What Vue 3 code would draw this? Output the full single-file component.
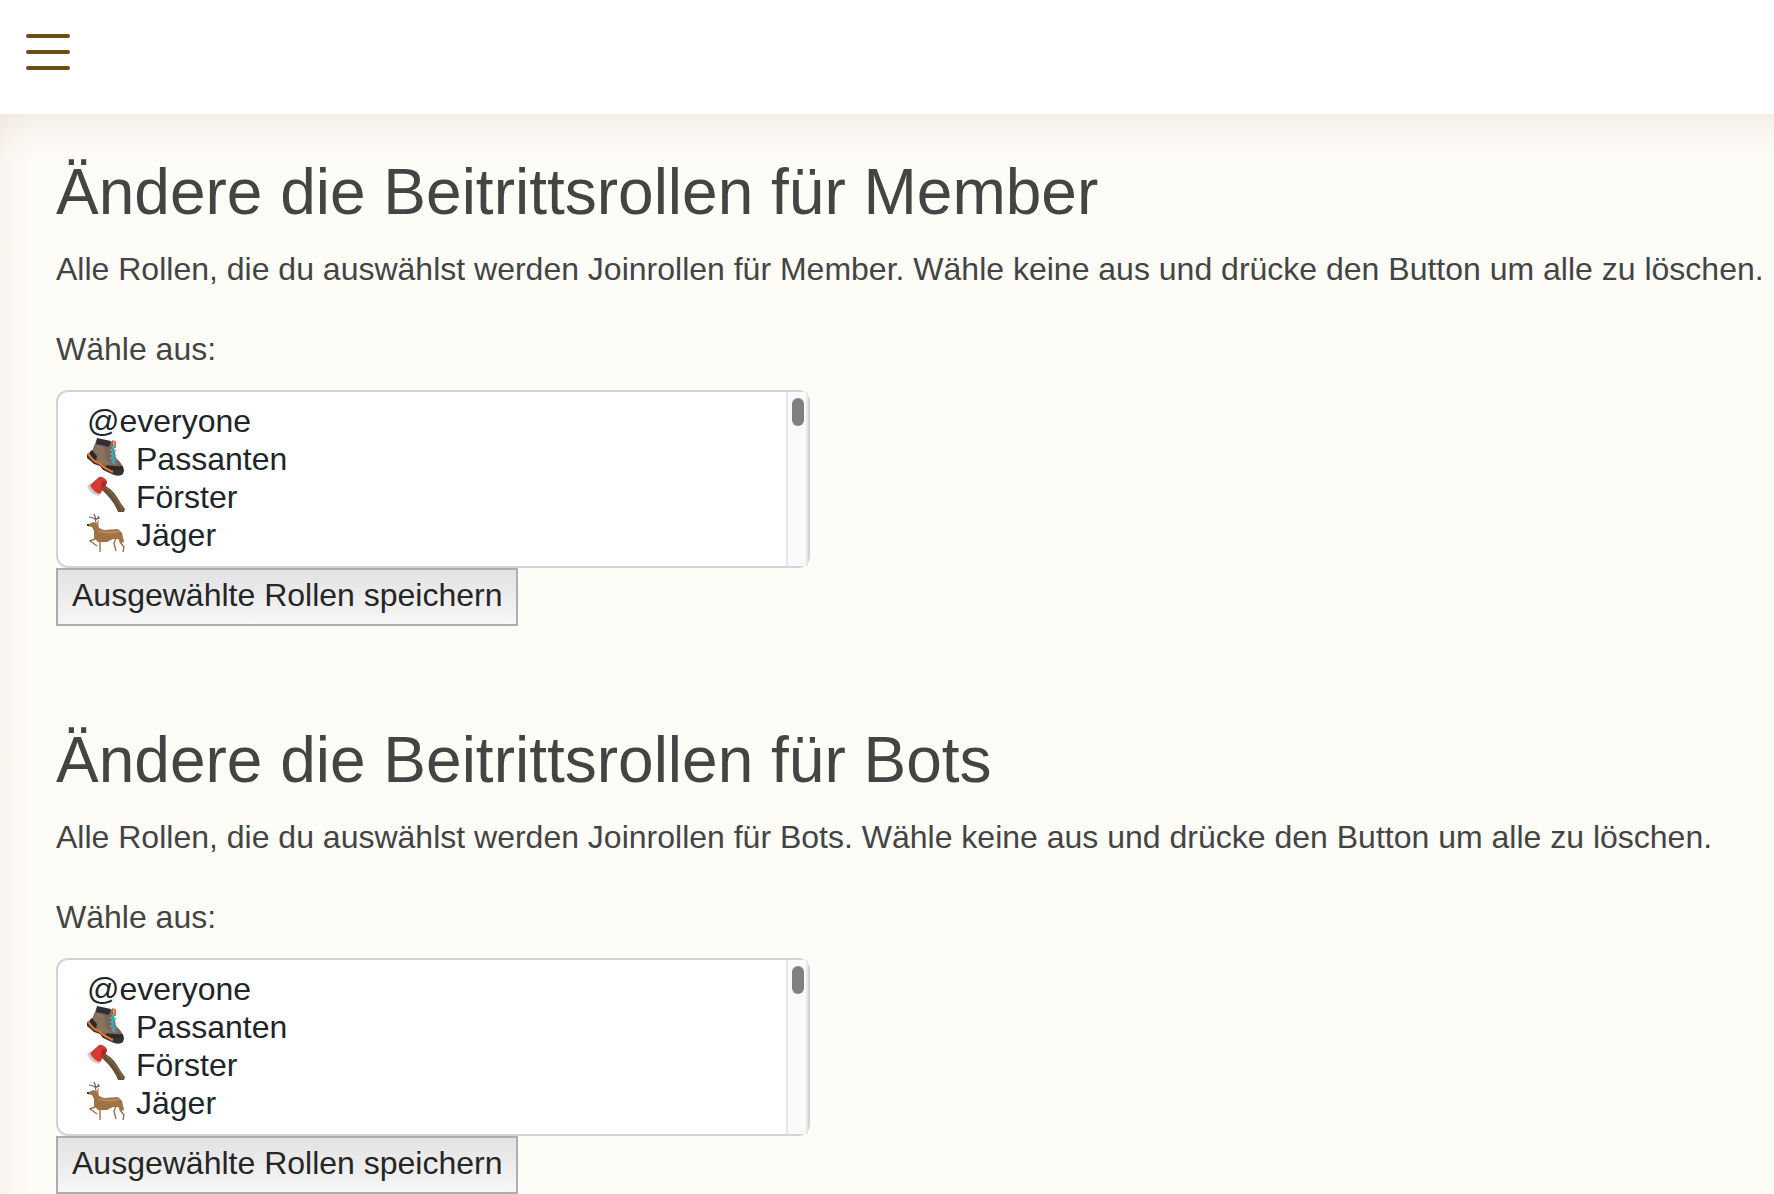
<script setup>
const groups = [
  { id: 'member', name: 'Member' },
  { id: 'bots', name: 'Bots' },
]
const roles = [
  { name: '@everyone', icon: '' },
  { name: 'Passanten', icon: 'boot' },
  { name: 'Förster', icon: 'axe' },
  { name: 'Jäger', icon: 'deer' },
]
</script>

<template>
  <div class="page">
    <header class="topbar">
      <button class="menu" type="button" aria-label="Menü">
        <svg width="44" height="36" viewBox="0 0 44 36" fill="none" stroke="#6b4c14" stroke-width="4" stroke-linecap="round">
          <path d="M2 2H42M2 18H42M2 34H42" />
        </svg>
      </button>
    </header>
    <main class="content">
      <form v-for="g in groups" :key="g.id" class="group" @submit.prevent>
        <h1>Ändere die Beitrittsrollen für {{ g.name }}</h1>
        <p>Alle Rollen, die du auswählst werden Joinrollen für {{ g.name }}. Wähle keine aus und drücke den Button um alle zu löschen.</p>
        <label :for="g.id">Wähle aus:</label>
        <div class="listbox">
          <select :id="g.id" multiple size="4">
            <option v-for="r in roles" :key="r.name" :class="r.icon">{{ r.name }}</option>
          </select>
          <span class="track" aria-hidden="true"><span class="thumb"></span></span>
        </div>
        <button class="save" type="submit">Ausgewählte Rollen speichern</button>
      </form>
    </main>
  </div>
</template>

<style>
body {
  margin: 0;
}
</style>

<style scoped>
.page {
  display: flex;
  flex-direction: column;
  min-height: 100vh;
  font-family: "Liberation Sans", Arial, sans-serif;
  font-size: 32px;
  line-height: 46px;
  color: #444;
}
.topbar {
  display: flex;
  align-items: flex-start;
  box-sizing: border-box;
  height: 114px;
  padding: 34px 26px;
  background: #fff;
}
.menu {
  display: flex;
  padding: 0;
  border: 0;
  background: none;
}
.content {
  flex: 1;
  display: flex;
  flex-direction: column;
  gap: 96px;
  padding: 40px 0 0 56px;
  background:
    linear-gradient(to bottom, rgba(120, 60, 30, 0.07), rgba(120, 60, 30, 0.035) 18px, rgba(120, 60, 30, 0.01) 32px, transparent 46px),
    linear-gradient(to right, rgba(120, 60, 30, 0.045), rgba(120, 60, 30, 0.02) 14px, rgba(120, 60, 30, 0.006) 26px, transparent 38px),
    #fefcf7;
}
.group {
  display: flex;
  flex-direction: column;
  align-items: flex-start;
}
h1 {
  margin: 0 0 16px;
  font-size: 64px;
  font-weight: 400;
  line-height: 76px;
}
p {
  margin: 0 0 34px;
}
label {
  margin-bottom: 18px;
}
.listbox {
  position: relative;
  box-sizing: border-box;
  width: 100%;
  max-width: 754px;
  border: 2px solid #ced4da;
  border-radius: 12px;
  background: #fff;
}
select {
  display: block;
  box-sizing: border-box;
  width: 100%;
  height: 174px;
  padding: 8px 24px;
  border: 0;
  outline: 0;
  background: transparent;
  font: inherit;
  color: #212529;
  overflow: hidden;
}
option {
  box-sizing: border-box;
  height: 38px;
  min-height: 38px;
  padding: 3px 5px 0;
  background-repeat: no-repeat;
  background-position: 5px 0;
  background-size: 38px 38px;
}
.boot,
.axe,
.deer {
  padding-left: 54px;
}
.boot {
  background-image: url("data:image/svg+xml,%3Csvg xmlns='http://www.w3.org/2000/svg' viewBox='0 0 38 38'%3E%3Cpath d='M10 1L26 4L29 20Q36 26 36 31L33 35Q25 34 16 29L2 19Q1 15 5 13Z' fill='%237d6553'/%3E%3Cpath d='M10 7L17 8L19 22L25 27L20 29L9 22L5 13Z' fill='%238b7260'/%3E%3Cpath d='M5 12L10 18L9 24L2 19Q1 15 5 12M20 27Q28 29 36 28L37 33L34 35Q25 34 17 30Z' fill='%23292928'/%3E%3Cpath d='M0 16L8 23L16 27L25 32L37 32L36 36Q33 39 27 37L16 32L13 28L7 26L0 20Z' fill='%23363230'/%3E%3Cpath d='M1 15Q5 23 12 25Q17 30 26 34' fill='none' stroke='%23e57432' stroke-width='2.2'/%3E%3Cpath d='M10 0L24 3L22 9L9 6Z' fill='%23333035'/%3E%3Cpath d='M25 3L28 4L28 10' fill='none' stroke='%23df7138' stroke-width='2'/%3E%3Cpath d='M24 8L27 9L24 12L28 13L24 16L28 18L24 20L28 22L25 24L29 26' fill='none' stroke='%2347aaba' stroke-width='1.6'/%3E%3C/svg%3E");
}
.axe {
  background-image: url("data:image/svg+xml,%3Csvg xmlns='http://www.w3.org/2000/svg' viewBox='0 0 38 38'%3E%3Cpath d='M17 9Q25 13 30 21Q34 28 38 33L37 36L31 36Q27 25 15 14Z' fill='%23665137'/%3E%3Cpath d='M19 12Q28 19 36 34' fill='none' stroke='%237f6846' stroke-width='1.5'/%3E%3Cpath d='M0 10L3 8L14 17L12 20Q3 18 0 10Z' fill='%23d0c9c6'/%3E%3Cpath d='M3 9L12 1Q16 0 20 5L19 9L13 18Q6 16 3 9Z' fill='%23d43b32'/%3E%3Cpath d='M15 5L20 6L19 9L14 14Z' fill='%23a92928'/%3E%3C/svg%3E");
}
.deer {
  background-image: url("data:image/svg+xml,%3Csvg xmlns='http://www.w3.org/2000/svg' viewBox='0 0 38 38'%3E%3Cpath d='M10 24L3 27L6 29L10 32M13 27L13 38M29 24L27 29L29 37M34 23L33 28L37 33L36 38' fill='none' stroke='%23957355' stroke-width='1.4'/%3E%3Cpath d='M0 11L6 8L11 9L12 14L17 16L31 15L35 19L37 28L34 29L31 25L26 25L20 28L11 28L7 24L7 17L5 13L0 12Z' fill='%239f7347'/%3E%3Cpath d='M12 17Q23 20 33 17' fill='none' stroke='%23b98956' stroke-width='2'/%3E%3Cpath d='M12 5L12 10L9 9Z' fill='%23dca19a'/%3E%3Cpath d='M2 3L6 4L9 5L7 0M9 5L13 4M10 5L12 2M8 5L9 8' fill='none' stroke='%23706460' stroke-width='1.2'/%3E%3Cpath d='M0 10L2 10L2 12L0 12Z' fill='%23392d28'/%3E%3C/svg%3E");
}
.track {
  position: absolute;
  top: 0;
  right: 0;
  bottom: 0;
  box-sizing: border-box;
  width: 22px;
  padding: 6px 2px 6px 4px;
  border: solid #e8e8e8;
  border-width: 0 2px;
  background: #fafafa;
}
.thumb {
  display: block;
  width: 12px;
  height: 28px;
  border-radius: 6px;
  background: #808080;
}
.save {
  box-sizing: border-box;
  height: 58px;
  padding: 0 14px 4px;
  border: 2px solid #adadad;
  border-radius: 0;
  background: linear-gradient(#e2e2e2, #f7f7f7);
  font: inherit;
  color: #262626;
}
</style>
